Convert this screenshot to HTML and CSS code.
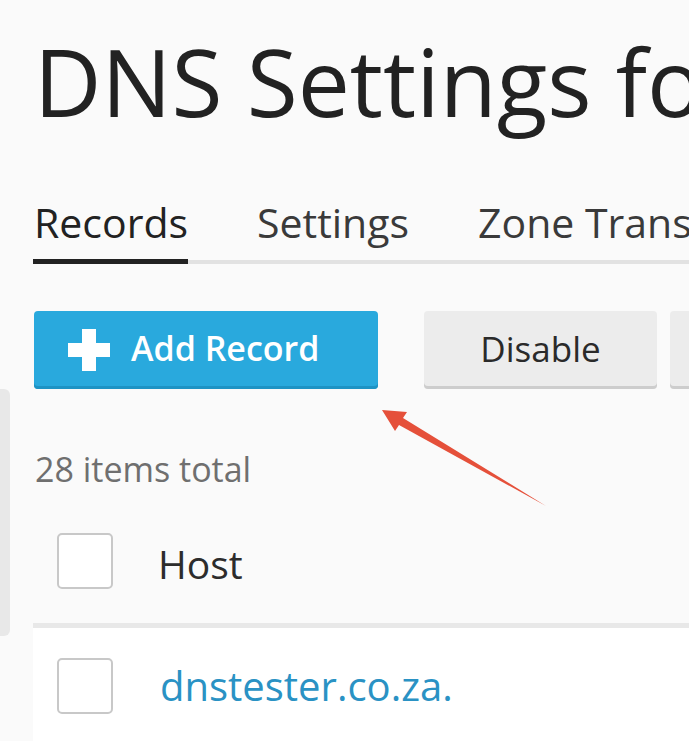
FILE: index.html
```html
<!DOCTYPE html>
<html lang="en">
<head>
<meta charset="utf-8">
<title>DNS Settings</title>
<link rel="stylesheet" href="styles.css">
</head>
<body>
<div class="page">
  <h1 class="title">DNS Settings for dnstester.co.za</h1>
  <nav class="tabs">
    <span class="tab tab-active">Records</span>
    <span class="tab">Settings</span>
    <span class="tab">Zone Transfers</span>
  </nav>
  <div class="toolbar">
    <button class="btn btn-primary" type="button">
      <svg class="btn-icon" width="42" height="42" viewBox="0 0 42 42" aria-hidden="true">
        <rect x="14" y="0" width="14" height="42" fill="#fff"/>
        <rect x="0" y="14" width="42" height="14" fill="#fff"/>
      </svg>
      <span>Add Record</span>
    </button>
    <button class="btn btn-default btn-disable" type="button">Disable</button>
    <button class="btn btn-default btn-more" type="button">Remove</button>
  </div>
  <div class="lower">
    <div class="side-strip"></div>
    <div class="list">
      <div class="list-total">28 items total</div>
      <div class="table">
        <div class="row row-head">
          <span class="checkbox"></span>
          <span class="cell cell-head">Host</span>
        </div>
        <div class="row row-body">
          <span class="checkbox"></span>
          <a class="cell cell-link" href="#">dnstester.co.za.</a>
        </div>
      </div>
    </div>
  </div>
  <svg class="annotation-arrow" width="689" height="741" viewBox="0 0 689 741" aria-hidden="true">
    <polygon points="382,410 407,412 403,418 546,506 399,425 395,431" fill="#e5503a"/>
  </svg>
</div>
</body>
</html>
```

FILE: styles.css
```css
html, body {
  margin: 0;
  padding: 0;
}

body {
  background: #fafafa;
  font-family: "Open Sans", "Noto Sans", sans-serif;
  color: #222;
  overflow: hidden;
  width: 689px;
  height: 741px;
}

.page {
  position: relative;
  padding-top: 17px;
  height: 724px;
  overflow: hidden;
}

.title {
  margin: 0 0 0 34px;
  font-size: 93px;
  line-height: 128px;
  font-weight: 400;
  color: #222;
  white-space: nowrap;
}

.tabs {
  display: flex;
  gap: 68px;
  margin: 50px 0 0 33px;
  border-bottom: 4px solid #e2e2e2;
  white-space: nowrap;
}

.tab {
  font-size: 41px;
  line-height: 54px;
  padding: 0 0 11px 1px;
  color: #3a3a3a;
  flex-shrink: 0;
}

.tab-active {
  color: #222;
  border-bottom: 5px solid #222;
  margin-bottom: -4px;
  padding-bottom: 7px;
}

.toolbar {
  display: flex;
  margin: 47px 0 0 34px;
  white-space: nowrap;
}

.btn {
  display: flex;
  align-items: center;
  height: 78px;
  box-sizing: border-box;
  border: 0;
  border-radius: 4px;
  padding: 0 0 3px 0;
  font-family: "Open Sans", "Noto Sans", sans-serif;
  font-size: 35px;
  line-height: 75px;
  flex-shrink: 0;
  cursor: pointer;
}

.btn-primary {
  width: 344px;
  padding-left: 34px;
  gap: 21px;
  background: #29a9dd;
  color: #fff;
  font-size: 34px;
  font-weight: 600;
  box-shadow: inset 0 -3px 0 #1e93c4;
}

.btn-icon {
  flex-shrink: 0;
  margin-top: 2px;
}

.btn-default {
  background: #ececec;
  color: #2a2a2a;
  font-weight: 400;
  box-shadow: inset 0 -3px 0 #cdcdcd;
  justify-content: center;
}

.btn-disable {
  width: 233px;
  margin-left: 46px;
}

.btn-more {
  width: 220px;
  margin-left: 13px;
}

.lower {
  display: flex;
  gap: 23px;
}

.side-strip {
  width: 10px;
  height: 247px;
  flex-shrink: 0;
  background: #e8e8e8;
  border-radius: 0 6px 6px 0;
}

.list {
  flex: 1;
}

.list-total {
  margin: 57px 0 0 2px;
  font-size: 34px;
  line-height: 46px;
  color: #6f6f6f;
}

.table {
  margin-top: 14px;
}

.row {
  display: flex;
  align-items: flex-start;
  padding-left: 24px;
}

.row-head {
  padding-top: 27px;
  padding-bottom: 31px;
  border-bottom: 5px solid #e8e8e8;
}

.row-body {
  background: #fff;
  padding-top: 30px;
  padding-bottom: 40px;
}

.checkbox {
  width: 56px;
  height: 56px;
  box-sizing: border-box;
  border: 2px solid #c8c8c8;
  border-radius: 5px;
  background: #fff;
  flex-shrink: 0;
}

.cell {
  margin-left: 47px;
  font-size: 40px;
  line-height: 56px;
  white-space: nowrap;
}

.cell-head {
  font-size: 39px;
  color: #2c2c2c;
  padding-top: 3px;
  margin-left: 45px;
}

.cell-link {
  color: #2a92c4;
  text-decoration: none;
}

.annotation-arrow {
  position: absolute;
  left: 0;
  top: 0;
  pointer-events: none;
}
```
